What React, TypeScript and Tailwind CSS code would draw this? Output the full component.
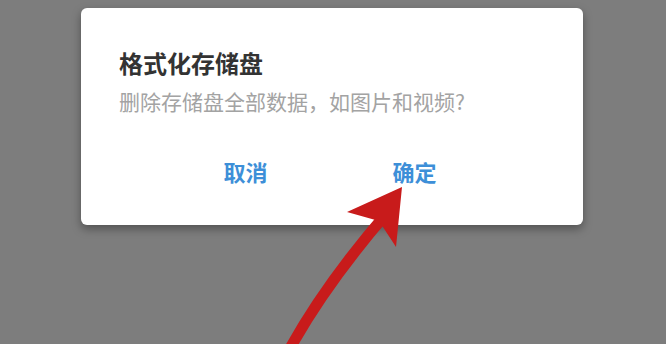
import React from 'react';

const FONT = { fontFamily: '"Noto Sans CJK SC", "Noto Sans", sans-serif' };

// 指示箭头（覆盖在对话框上）
function Arrow() {
  return (
    <svg
      className="absolute inset-0 pointer-events-none"
      width="666"
      height="344"
      viewBox="0 0 666 344"
    >
      <path
        d="M 288 352 Q 324 286 386 214"
        fill="none"
        stroke="#c81b1b"
        strokeWidth="11"
        strokeLinecap="butt"
      />
      <polygon points="402,187 347,212 379,221 396,247" fill="#c81b1b" />
    </svg>
  );
}

export default function App() {
  return (
    <div className="relative w-[666px] h-[344px] overflow-hidden bg-[#7d7d7d]" style={FONT}>
      <div className="pt-[8px] pl-[81px]">
        <div className="w-[502px] h-[217px] bg-white rounded-[6px] shadow-[0_4px_10px_rgba(0,0,0,0.35)] pt-[39px] px-[38px]">
          <h1 className="text-[24px] leading-[32px] font-bold text-[#333333]">格式化存储盘</h1>
          <p className="mt-[8px] text-[21px] leading-[28px] text-[#a3a3a3]">
            删除存储盘全部数据，如图片和视频?
          </p>
          <div className="mt-[41px] flex justify-center gap-[125px] pr-[4px]">
            <button className="text-[22px] leading-[30px] font-bold text-[#3d8fd8]">取消</button>
            <button className="text-[22px] leading-[30px] font-bold text-[#3d8fd8]">确定</button>
          </div>
        </div>
      </div>
      <Arrow />
    </div>
  );
}
